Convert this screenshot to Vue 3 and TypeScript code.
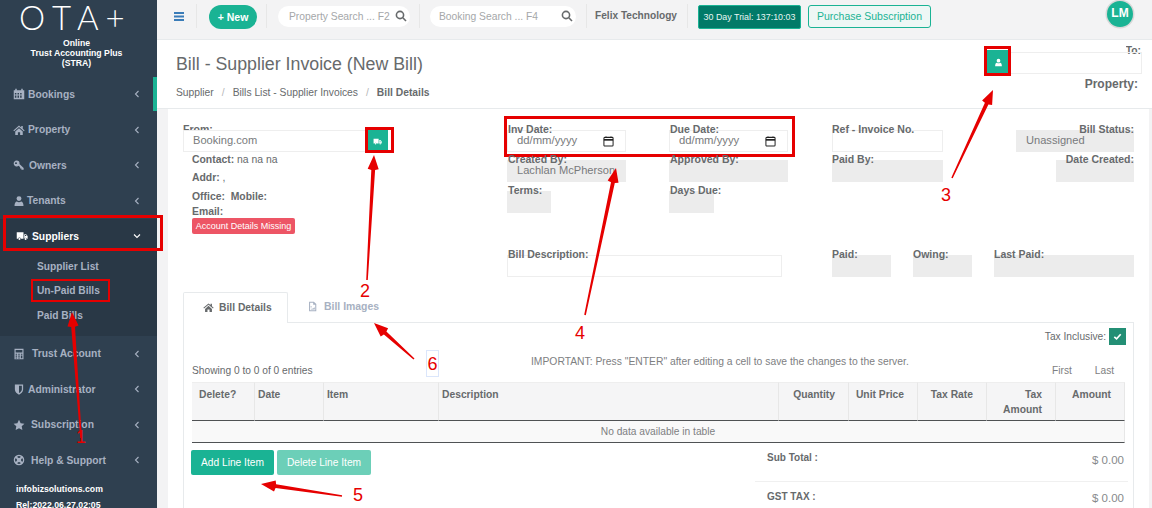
<script setup lang="ts">
type Icon = 'calendar' | 'home' | 'key' | 'user' | 'truck' | 'calc' | 'shield' | 'star' | 'life'

interface NavItem { label: string; icon: Icon; open?: boolean; gap: number }

const navTop: NavItem[] = [
  { label: 'Bookings', icon: 'calendar', gap: 3 },
  { label: 'Property', icon: 'home', gap: 3 },
  { label: 'Owners', icon: 'key', gap: 4 },
  { label: 'Tenants', icon: 'user', gap: 2 },
  { label: 'Suppliers', icon: 'truck', open: true, gap: 4 }
]
const navSub = ['Supplier List', 'Un-Paid Bills', 'Paid Bills']
const navBottom: NavItem[] = [
  { label: 'Trust Account', icon: 'calc', gap: 7 },
  { label: 'Administrator', icon: 'shield', gap: 3 },
  { label: 'Subscription', icon: 'star', gap: 6 },
  { label: 'Help & Support', icon: 'life', gap: 6 }
]

const columns = [
  { label: 'Delete?', w: 63, cls: 'first' },
  { label: 'Date', w: 69, cls: '' },
  { label: 'Item', w: 115, cls: '' },
  { label: 'Description', w: 340, cls: '' },
  { label: 'Quantity', w: 70, cls: 'rgt' },
  { label: 'Unit Price', w: 69, cls: 'rgt' },
  { label: 'Tax Rate', w: 69, cls: 'rgt' },
  { label: 'Tax Amount', w: 69, cls: 'rgt' },
  { label: 'Amount', w: 69, cls: 'rgt' }
]

const iconPaths: Record<Icon, string> = {
  calendar: 'M1 3h2V1h2v2h6V1h2v2h2v12H1zM2.500 6.500v2h2v-2zm3.500 0v2h2v-2zm3.500 0v2h2v-2zM2.500 10v3h2v-3zm3.500 0v3h2v-3zm3.500 0v3h2v-3z',
  home: 'M8 2 0.500 8.500l1 1L8 4l6.500 5.500 1-1L13 6.300V2.500h-2v2zM3 10v4.500h3.500v-3.500h3V14.500H13V10L8 5.500z',
  key: 'M5 2a4 4 0 1 0 2.600 7l1.900 1.900v1.600h1.700v1.700h3V12L8.600 6.500A4 4 0 0 0 5 2zM4 4.200a1.300 1.300 0 1 1 0 2.600 1.300 1.300 0 0 1 0-2.600z',
  user: 'M8 1.500a3.300 3.300 0 1 1 0 6.600 3.300 3.300 0 0 1 0-6.600zM2 14.500c0-4 1.500-6 3.200-6 .8.600 1.700 1 2.800 1s2-.4 2.800-1c1.700 0 3.200 2 3.200 6z',
  truck: 'M1 3h9v8.500H6.500a2 2 0 0 0-3.800 0H1zM11 5.500h2.500L15.500 8v3.500h-.8a2 2 0 0 0-3.700 0zM12 6.500V8h2.200l-1.100-1.500zM4.600 10.800a1.300 1.300 0 1 1 0 2.600 1.300 1.300 0 0 1 0-2.600zM12.800 10.800a1.300 1.300 0 1 1 0 2.600 1.300 1.300 0 0 1 0-2.600z',
  calc: 'M2 1h12v14H2zM3.500 2.500V6h9V2.500zM3.500 7.500v1.500h2V7.500zm3.500 0v1.500h2V7.500zm3.500 0v1.500h2V7.500zM3.500 10v1.500h2V10zm3.500 0v1.500h2V10zm3.500 0v3.500h2V10zM3.500 12.500V14h2v-1.500zm3.500 0V14h2v-1.500z',
  shield: 'M2.500 2h11v6.500c0 3.500-3 5.500-5.500 7-2.500-1.500-5.500-3.500-5.500-7zM8 3.800v9.500c1.800-1.100 3.800-2.700 3.800-4.800V3.800z',
  star: 'M8 1l2.200 4.600 5 .7-3.600 3.500.9 5L8 12.400l-4.500 2.400.9-5L.8 6.300l5-.7z',
  life: 'M8 1a7 7 0 1 1 0 14A7 7 0 0 1 8 1zM5.700 3.200l1 2.100a3 3 0 0 1 2.600 0l1-2.100a5.300 5.300 0 0 0-4.600 0zM3.200 5.700a5.300 5.300 0 0 0 0 4.600l2.100-1a3 3 0 0 1 0-2.600zM12.800 5.700l-2.100 1a3 3 0 0 1 0 2.600l2.100 1a5.300 5.300 0 0 0 0-4.600zM6.700 10.700l-1 2.100a5.300 5.300 0 0 0 4.600 0l-1-2.100a3 3 0 0 1-2.600 0z'
}

function arrow(x1: number, y1: number, x2: number, y2: number): string {
  const dx = x2 - x1
  const dy = y2 - y1
  const len = Math.hypot(dx, dy)
  const ux = dx / len
  const uy = dy / len
  const nx = -uy
  const ny = ux
  const head = 15
  const bx = x2 - ux * head
  const by = y2 - uy * head
  const pts: [number, number][] = [
    [x1 + nx * 0.8, y1 + ny * 0.8],
    [bx + nx * 1.9, by + ny * 1.9],
    [bx + ux + nx * 5.5, by + uy + ny * 5.5],
    [x2, y2],
    [bx + ux - nx * 5.5, by + uy - ny * 5.5],
    [bx - nx * 1.9, by - ny * 1.9],
    [x1 - nx * 0.8, y1 - ny * 0.8]
  ]
  return pts.map(p => p[0].toFixed(1) + ',' + p[1].toFixed(1)).join(' ')
}

const arrows = [
  arrow(81, 438, 72, 312),
  arrow(367, 280, 374, 155),
  arrow(952, 178, 993, 90),
  arrow(585, 315, 616, 168),
  arrow(342, 496, 261, 484),
  arrow(414, 359, 374, 323)
]
const marks = [
  { n: '1', cls: 'm1' },
  { n: '2', cls: 'm2' },
  { n: '3', cls: 'm3' },
  { n: '4', cls: 'm4' },
  { n: '5', cls: 'm5' }
]
</script>

<template>
  <div class="page">
    <aside class="side">
      <div class="logo">O T A +</div>
      <div class="brand">Online<br />Trust Accounting Plus<br />(STRA)</div>
      <nav class="nav">
        <a v-for="it in navTop" :key="it.label" class="nav-item" :class="{ active: it.open }">
          <svg class="nav-ico" viewBox="0 0 16 16"><path :d="iconPaths[it.icon]" fill-rule="evenodd" /></svg>
          <span class="nav-label" :style="{ marginLeft: it.gap + 'px' }">{{ it.label }}</span>
          <svg class="chev" viewBox="0 0 8 8">
            <path :d="it.open ? 'M1 2.500 4 5.500 7 2.500' : 'M5.500 1 2.500 4 5.500 7'" />
          </svg>
        </a>
        <div class="sub">
          <a v-for="s in navSub" :key="s" class="sub-item">{{ s }}</a>
        </div>
        <a v-for="it in navBottom" :key="it.label" class="nav-item">
          <svg class="nav-ico" viewBox="0 0 16 16"><path :d="iconPaths[it.icon]" fill-rule="evenodd" /></svg>
          <span class="nav-label" :style="{ marginLeft: it.gap + 'px' }">{{ it.label }}</span>
          <svg class="chev" viewBox="0 0 8 8"><path d="M5.500 1 2.500 4 5.500 7" /></svg>
        </a>
      </nav>
      <div class="foot">infobizsolutions.com</div>
      <div class="foot rel">Rel:2022.06.27.02:05</div>
    </aside>

    <main class="main">
      <header class="top">
        <svg class="burger" viewBox="0 0 10 9"><path d="M0 0h10v2H0zM0 3.500h10v2H0zM0 7h10v2H0z" /></svg>
        <i class="div d1"></i>
        <button class="new">+ New</button>
        <i class="div d2"></i>
        <div class="search s1">
          <span>Property Search ... F2</span>
          <svg viewBox="0 0 12 12"><circle cx="5" cy="5" r="3.600" /><path d="M7.800 7.800 11 11" /></svg>
        </div>
        <i class="div d3"></i>
        <div class="search s2">
          <span>Booking Search ... F4</span>
          <svg viewBox="0 0 12 12"><circle cx="5" cy="5" r="3.600" /><path d="M7.800 7.800 11 11" /></svg>
        </div>
        <i class="div d4"></i>
        <b class="org">Felix Technology</b>
        <i class="div d5"></i>
        <div class="trial">30 Day Trial: 137:10:03</div>
        <button class="buy">Purchase Subscription</button>
        <div class="avatar">LM</div>
      </header>

      <section class="head">
        <div class="head-left">
          <h1>Bill - Supplier Invoice (New Bill)</h1>
          <div class="crumbs">
            <span>Supplier</span><em>/</em><span>Bills List - Supplier Invoices</span><em>/</em><b>Bill Details</b>
          </div>
        </div>
        <div class="head-right">
          <label class="to">To:</label>
          <div class="to-row">
            <button class="sq sq-user">
              <svg viewBox="0 0 16 16"><path :d="iconPaths.user" /></svg>
            </button>
            <div class="inp to-inp"></div>
          </div>
          <b class="prop">Property:</b>
        </div>
      </section>

      <section class="body">
        <div class="form">
          <div class="from">
            <label class="lbl from-l">From:</label>
            <div class="from-row">
              <div class="inp from-inp">Booking.com</div>
              <button class="sq sq-truck">
                <svg viewBox="0 0 16 16"><path :d="iconPaths.truck" fill-rule="evenodd" /></svg>
              </button>
            </div>
            <div class="info i1"><b>Contact:</b> na na na</div>
            <div class="info i2"><b>Addr:</b> ,</div>
            <div class="info i3"><b>Office:&nbsp; Mobile:</b></div>
            <div class="info i4"><b>Email:</b></div>
            <span class="badge">Account Details Missing</span>
          </div>

          <div class="fields">
            <div class="f"><label class="lbl">Inv Date:</label><div class="inp date">dd/mm/yyyy<svg viewBox="0 0 12 12"><path d="M2 1.500h8a1 1 0 0 1 1 1V10a1 1 0 0 1-1 1H2a1 1 0 0 1-1-1V2.500a1 1 0 0 1 1-1z" /><path d="M1 4.200h10" class="thick" /><path d="M3.300 .5v1.500M8.700 .5v1.500" /></svg></div></div>
            <div class="f"><label class="lbl">Due Date:</label><div class="inp date">dd/mm/yyyy<svg viewBox="0 0 12 12"><path d="M2 1.500h8a1 1 0 0 1 1 1V10a1 1 0 0 1-1 1H2a1 1 0 0 1-1-1V2.500a1 1 0 0 1 1-1z" /><path d="M1 4.200h10" class="thick" /><path d="M3.300 .5v1.500M8.700 .5v1.500" /></svg></div></div>
            <div class="f c3"><label class="lbl">Ref - Invoice No.</label><div class="inp ref"></div></div>
            <div class="f rt"><label class="lbl">Bill Status:</label><div class="inp ro status">Unassigned</div></div>

            <div class="f"><label class="lbl">Created By:</label><div class="inp ro creator">Lachlan McPherson</div></div>
            <div class="f"><label class="lbl">Approved By:</label><div class="inp ro date"></div></div>
            <div class="f c3"><label class="lbl">Paid By:</label><div class="inp ro ref"></div></div>
            <div class="f rt"><label class="lbl">Date Created:</label><div class="inp ro dc"></div></div>

            <div class="f"><label class="lbl">Terms:</label><div class="inp ro tiny"></div></div>
            <div class="f"><label class="lbl">Days Due:</label><div class="inp ro tiny2"></div></div>
            <div class="f"></div>
            <div class="f"></div>

            <div class="f desc-row">
              <label class="lbl">Bill Description:</label><div class="inp desc"></div>
            </div>
            <div class="f paid-row">
              <div class="f c3"><label class="lbl">Paid:</label><div class="inp ro p"></div></div>
              <div class="f c3"><label class="lbl">Owing:</label><div class="inp ro p"></div></div>
              <div class="f c3 lp"><label class="lbl">Last Paid:</label><div class="inp ro"></div></div>
            </div>
          </div>
        </div>

        <div class="tabs">
          <div class="tab on">
            <svg viewBox="0 0 16 16"><path :d="iconPaths.home" /></svg>
            <b>Bill Details</b>
          </div>
          <div class="tab off">
            <svg viewBox="0 0 16 16"><path d="M3 1h7l3.500 3.500V15H3zM4.500 2.500v11h7.500V5.500H9V2.500zM6 7.500a1 1 0 1 1 0 2 1 1 0 0 1 0-2zM5.500 12.500l2-2 1 1 2-2.500 .8 1v2.500z" fill-rule="evenodd" /></svg>
            <b>Bill Images</b>
          </div>
        </div>
        <div class="panel">
          <div class="tax">
            <span>Tax Inclusive:</span>
            <i class="check"><svg viewBox="0 0 12 12"><path d="M2.500 6.300 5 8.600 9.500 3.600" /></svg></i>
          </div>
          <div class="meta">
            <span class="showing">Showing 0 to 0 of 0 entries</span>
            <span class="important">IMPORTANT: Press "ENTER" after editing a cell to save the changes to the server.</span>
            <span class="pager"><span>First</span><span>Last</span></span>
          </div>
          <table class="grid">
            <colgroup><col v-for="c in columns" :key="c.label" :style="{ width: c.w + 'px' }" /></colgroup>
            <thead>
              <tr><th v-for="c in columns" :key="c.label" :class="c.cls">{{ c.label }}</th></tr>
            </thead>
            <tbody>
              <tr><td :colspan="columns.length">No data available in table</td></tr>
            </tbody>
          </table>
          <div class="after">
            <div class="btns">
              <button class="btn add">Add Line Item</button>
              <button class="btn del">Delete Line Item</button>
            </div>
            <div class="totals">
              <div class="tot first"><b>Sub Total :</b><span>$ 0.00</span></div>
              <div class="tot"><b>GST TAX :</b><span>$ 0.00</span></div>
            </div>
          </div>
        </div>
      </section>
    </main>

    <div class="notes">
      <svg class="arrows" width="1152" height="508" viewBox="0 0 1152 508">
        <polygon v-for="(a, i) in arrows" :key="i" :points="a" fill="#e60000" />
      </svg>
      <i class="rb r1"></i><i class="rb r2"></i><i class="rb r3"></i><i class="rb r4"></i><i class="rb r5"></i>
      <span v-for="m in marks" :key="m.n" class="mark" :class="m.cls">{{ m.n }}</span>
      <span class="mark m6">6</span>
    </div>
  </div>
</template>

<style>
html, body { margin: 0; padding: 0; background: #f3f3f4; }
</style>

<style scoped>
.page { position: relative; display: flex; width: 1152px; height: 508px; overflow: hidden; font-family: "Liberation Sans", Arial, sans-serif; font-size: 10.300px; color: #676a6c; background: #f3f3f4; }
button { font-family: inherit; cursor: default; }

.side { width: 157px; flex: none; background: #2f4050; display: flex; flex-direction: column; overflow: hidden; }
.logo { height: 36px; padding-left: 19px; font-family: Lato, "Liberation Sans", sans-serif; font-weight: 300; font-size: 33px; line-height: 34px; color: #fff; white-space: pre; letter-spacing: -0.500px; }
.brand { text-align: center; color: #fff; font-size: 8.700px; line-height: 10px; font-weight: 700; width: 153px; padding-top: 4px; height: 34px; }
.nav { display: flex; flex-direction: column; padding-top: 8.500px; }
.nav-item { height: 35.500px; display: flex; align-items: center; padding: 0 16px 0 13px; color: #a7b1c2; font-weight: 700; font-size: 10.300px; flex: none; box-sizing: border-box; }
.nav-item.active { color: #fff; padding-left: 16px; background: #293846; }
.nav-ico { width: 12px; height: 12px; fill: currentColor; flex: none; }
.nav-label { flex: 1; }
.chev { width: 8px; height: 8px; fill: none; stroke: currentColor; stroke-width: 1.100; flex: none; }
.sub { background: #293846; height: 83px; margin-top: -1px; padding-top: 1.500px; box-sizing: border-box; display: flex; flex-direction: column; }
.sub-item { height: 24.700px; line-height: 24.700px; padding-left: 37px; color: #a7b1c2; font-weight: 700; font-size: 10.200px; flex: none; }
.foot { color: #fff; font-size: 8.700px; font-weight: 700; padding-left: 16px; margin-top: 5px; line-height: 12px; flex: none; }
.foot.rel { margin-top: 4px; }

.main { flex: 1; min-width: 0; display: flex; flex-direction: column; }
.top { height: 40px; flex: none; box-sizing: border-box; border-bottom: 1px solid #e7eaec; display: flex; align-items: flex-start; padding-left: 17px; background: #f3f3f4; }
.burger { width: 10px; height: 9px; fill: #3a7cb8; margin-top: 12px; flex: none; }
.div { width: 1px; height: 24px; background: #e7e7e7; margin-top: 4px; flex: none; }
.d1 { margin-left: 12px; }
.new { margin: 5px 0 0 12px; width: 48px; height: 24px; padding: 0; border: 0; border-radius: 12px; background: #1ab394; color: #fff; font-size: 10.500px; font-weight: 700; flex: none; }
.d2 { margin-left: 9px; }
.search { height: 21px; margin-top: 6px; padding-bottom: 1px; border-radius: 11px; background: #fff; box-sizing: border-box; display: flex; align-items: center; justify-content: space-between; color: #a5a7a9; font-size: 10.300px; flex: none; }
.search svg { width: 12px; height: 12px; fill: none; stroke: #676a6c; stroke-width: 1.600; }
.s1 { width: 132px; margin-left: 11px; padding-left: 11px; padding-right: 3px; }
.d3 { margin-left: 9px; }
.s2 { width: 146px; margin-left: 10px; padding-left: 9px; padding-right: 3px; }
.d4 { margin-left: 10px; }
.org { font-size: 10.150px; margin: 9px 0 0 8px; width: 83px; line-height: 13px; white-space: nowrap; flex: none; }
.d5 { margin-left: 9px; }
.trial { margin: 5px 0 0 10px; width: 103px; height: 24px; box-sizing: border-box; border: 1px solid #1ab394; border-radius: 2px; background: #027a68; color: #e8f5f2; font-size: 8.900px; line-height: 22px; text-align: center; white-space: nowrap; flex: none; }
.buy { margin: 5px 0 0 7px; width: 123px; height: 23px; padding: 0 0 1px; border: 1px solid #1ab394; border-radius: 3px; background: #eef7f5; color: #1ab394; font-size: 10.500px; flex: none; }
.avatar { margin: 1px 0 0 176px; width: 26px; height: 26px; box-sizing: border-box; border-radius: 50%; background: #1ab394; color: #fff; font-weight: 700; font-size: 12px; line-height: 25px; text-align: center; box-shadow: 0 0 0 1.500px #d8d8d8; flex: none; }

.head { height: 69px; flex: none; box-sizing: border-box; background: #fff; border-bottom: 1px solid #e7eaec; display: flex; justify-content: space-between; position: relative; padding-left: 19px; }
.head::before { content: ""; position: absolute; left: -4px; top: 37px; width: 4px; height: 34px; background: #1ab394; }
h1 { margin: 13px 0 0; font-size: 17.770px; font-weight: 400; line-height: 22px; color: #676a6c; }
.crumbs { margin-top: 11px; font-size: 10.300px; line-height: 13px; display: flex; }
.crumbs em { font-style: normal; color: #b5b6b7; margin: 0 8px; }
.head-right { width: 168px; position: relative; padding-right: 10px; box-sizing: content-box; display: flex; flex-direction: column; align-items: flex-end; }
.to { font-weight: 700; font-size: 10.300px; line-height: 9px; height: 9px; margin: 6px 1px -3px 0; overflow: hidden; }
.to-row { display: flex; width: 155px; }
.to-inp { flex: 1; height: 22px; }
.prop { font-size: 12px; line-height: 14px; margin: 3px 4px 0 0; }
.sq { width: 22px; height: 24px; padding: 0; border: 0; background: #1ab394; display: flex; align-items: center; justify-content: center; flex: none; }
.sq svg { width: 9px; height: 9px; fill: #fff; }
.sq-truck { width: 22px; height: 22px; margin-left: 0; }
.sq-user { margin-top: -2px; }

.inp { box-sizing: border-box; height: 22px; border: 1px solid #eeeeee; background: transparent; padding: 0 9px; line-height: 18px; font-size: 11.100px; color: #787a7c; white-space: nowrap; overflow: hidden; }
.inp.ro { background: #ececec; border-color: #ececec; }

.body { flex: 1; min-height: 0; margin: 0 3px 0 11px; background: #fff; padding: 0 15px; }
.form { display: flex; height: 183px; box-sizing: border-box; padding-top: 14px; }
.from { width: 324px; flex: none; }
.lbl { display: block; height: 7px; line-height: 13px; font-weight: 700; font-size: 10.500px; white-space: nowrap; color: #676a6c; position: relative; z-index: 1; padding-left: 1px; }
.from-l { z-index: 0; height: 7px; overflow: hidden; padding-left: 0; }
.c3 .lbl { padding-left: 0; }
.from-row { display: flex; }
.from-inp { width: 183px; background: #fff; position: relative; }
.info { font-size: 10.400px; padding-left: 9px; line-height: 13px; white-space: nowrap; }
.i1 { margin-top: 0; padding-top: 1px; }
.i2 { margin-top: 5px; }
.i3 { margin-top: 6px; }
.i4 { margin-top: 2px; }
.badge { display: inline-block; margin: 0 0 0 9px; width: 103px; height: 16px; border-radius: 2px; background: #ed5565; color: #fff; font-size: 9px; line-height: 16px; text-align: center; white-space: nowrap; vertical-align: top; }

.fields { width: 627px; flex: none; display: grid; grid-template-columns: 162px 163px 184px 118px; grid-template-rows: 30px 31px 64px 30px; align-content: start; }
.f { min-width: 0; }
.rt .lbl { text-align: right; }
.date { width: 119px; font-size: 11.300px; color: #787a7c; padding: 0 0 0 9px; position: relative; }
.date svg { position: absolute; right: 11px; top: 5px; width: 11px; height: 11px; fill: none; stroke: #222; stroke-width: 1.100; }
.date svg .thick { stroke-width: 1.800; }
.ref { width: 111px; }
.status { width: 118px; }
.creator { width: 119px; padding: 0 0 0 9px; }
.dc { width: 78px; margin-left: auto; }
.tiny { width: 44px; }
.tiny2 { width: 45px; }
.desc-row { grid-column: 1 / span 2; }
.desc { width: 275px; }
.paid-row { grid-column: 3 / span 2; display: flex; }
.paid-row .p { width: 59px; }
.paid-row > .f:nth-child(1), .paid-row > .f:nth-child(2) { margin-right: 22px; }
.lp { flex: 1; }

.tabs { display: flex; height: 30px; position: relative; z-index: 1; }
.tab { height: 31px; box-sizing: border-box; display: flex; align-items: center; padding-bottom: 2px; font-size: 10.300px; }
.tab svg { width: 11px; height: 11px; fill: currentColor; margin-right: 5px; }
.tab.on { width: 105px; padding-left: 19px; background: #fff; border: 1px solid #e7eaec; border-bottom: 0; border-radius: 2px 2px 0 0; }
.tab.off { padding-left: 19px; color: #a7b1c2; font-size: 10.450px; }
.tab.off svg { margin-right: 6px; }
.panel { border: 1px solid #e7eaec; border-bottom: 0; height: 186px; box-sizing: border-box; padding: 0 8px; }
.tax { display: flex; justify-content: flex-end; align-items: center; height: 15px; margin: 6px -1px 0 0; gap: 3px; font-size: 10.200px; }
.check { width: 17px; height: 17px; background: #238f75; display: flex; align-items: center; justify-content: center; }
.check svg { width: 11px; height: 11px; fill: none; stroke: #fff; stroke-width: 1.800; }
.meta { position: relative; height: 33px; margin-top: 5px; font-size: 10.200px; line-height: 13px; }
.showing { position: absolute; left: 0; top: 15px; }
.important { position: absolute; left: 339px; top: 6px; font-size: 10.340px; white-space: nowrap; color: #7e8082; }
.pager { position: absolute; left: 860px; top: 15px; display: flex; gap: 23px; color: #7e8082; }
.grid { width: 933px; table-layout: fixed; border-collapse: separate; border-spacing: 0; font-size: 10.300px; }
.grid th { height: 36px; box-sizing: border-box; background: #f5f5f6; border-right: 1px solid #e7e7e7; border-bottom: 1px solid #4f5254; border-top: 1px solid #eee; vertical-align: top; text-align: left; padding: 5px 3px 3px; line-height: 14.500px; font-weight: 700; color: #676a6c; }
.grid th.first { padding-left: 7px; }
.grid th.rgt { text-align: right; padding-right: 13px; }
.grid td { height: 22px; box-sizing: border-box; background: #f9f9f9; border-bottom: 1px solid #4f5254; border-right: 1px solid #e7e7e7; text-align: center; color: #7e8082; padding: 0; font-size: 10.200px; }
.after { display: flex; justify-content: space-between; margin-top: 7px; }
.btns { display: flex; gap: 3px; margin-left: -1px; }
.btn { height: 25px; border: 0; border-radius: 2px; padding: 0; color: #fff; font-size: 10.200px; }
.add { width: 83px; background: #1ab394; }
.del { width: 94px; background: #6ccfb8; }
.totals { width: 373px; margin-right: -3px; flex: none; }
.tot { display: flex; justify-content: space-between; padding: 0 4px 0 12px; height: 32px; }
.tot.first { height: 31px; border-bottom: 1px solid #f0f0f0; }
.tot b { font-size: 10px; line-height: 14px; margin-top: 1px; }
.tot span { font-size: 11.500px; line-height: 14px; padding-top: 3px; color: #888a8c; }
.tot:not(.first) { padding-top: 7px; }
.tot:not(.first) span { padding-top: 2px; }

.notes { position: absolute; inset: 0; pointer-events: none; }
.arrows { position: absolute; left: 0; top: 0; }
.rb { position: absolute; box-sizing: border-box; border: 3px solid #e60000; }
.r1 { left: 3px; top: 215px; width: 160px; height: 36px; }
.r2 { left: 31px; top: 279px; width: 79px; height: 23px; border-width: 2.500px; }
.r3 { left: 365px; top: 127px; width: 29px; height: 26px; }
.r4 { left: 984px; top: 46px; width: 27px; height: 30px; }
.r5 { left: 504px; top: 116px; width: 291px; height: 41px; }
.mark { position: absolute; color: #e60000; font-size: 18px; line-height: 20px; }
.m1 { left: 76px; top: 427px; }
.m2 { left: 360px; top: 281px; }
.m3 { left: 941px; top: 185px; }
.m4 { left: 575px; top: 323px; }
.m5 { left: 353px; top: 485px; }
.m6 { left: 426px; top: 350px; width: 13px; height: 27px; line-height: 27px; text-align: center; box-sizing: border-box; border: 1px solid #dbe6fb; }
</style>
